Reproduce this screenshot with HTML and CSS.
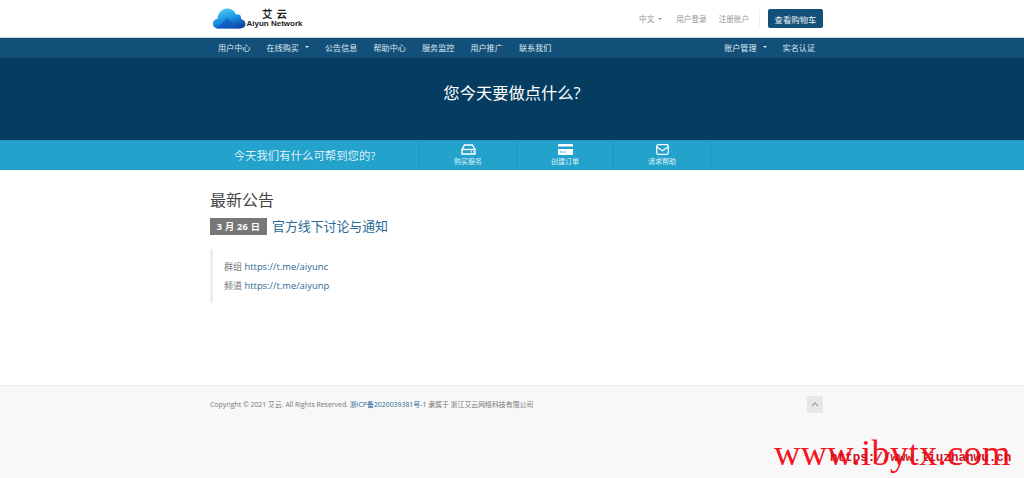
FILE: index.html
```html
<!DOCTYPE html>
<html lang="zh">
<head>
<meta charset="utf-8">
<title>艾云</title>
<link rel="stylesheet" href="styles.css">
</head>
<body>
<header class="top">
  <div class="wrap top-in">
    <a class="logo">
      <svg class="cloud" width="33" height="21" viewBox="0 0 33 21">
        <defs><linearGradient id="g" x1="0.2" y1="0" x2="0.7" y2="1"><stop offset="0" stop-color="#4fd0f8"/><stop offset="0.55" stop-color="#1a8fe0"/><stop offset="1" stop-color="#0d3fa0"/></linearGradient></defs>
        <path d="M5 20.500C1.500 20.500 0 18 0 15.500C0 12.800 2 11 4.500 10.800C5 5 9 .5 14 .5C18.500 .5 21.500 3 23 6.500C24 6 25.500 6 26.500 6.800C28 7.800 28.300 9.500 28 11C30.800 11.500 32.500 13.500 32.500 15.800C32.500 18.500 30.500 20.500 27.500 20.500Z" fill="url(#g)"/>
        <path d="M4 20.500L14 10L27 20.500Z" fill="#0e55c0" opacity=".65"/>
      </svg>
      <span class="logo-text"><span class="logo-cn">艾云</span><span class="logo-en">Aiyun Network</span></span>
    </a>
    <nav class="top-links">
      <a class="tl">中文<i class="caret"></i></a>
      <a class="tl">用户登录</a>
      <a class="tl tl-last">注册账户</a>
      <a class="cart">查看购物车</a>
    </nav>
  </div>
</header>
<nav class="mainnav">
  <div class="wrap nav-in">
    <div class="nav-group">
      <a>用户中心</a>
      <a>在线购买<i class="caret"></i></a>
      <a>公告信息</a>
      <a>帮助中心</a>
      <a>服务监控</a>
      <a>用户推广</a>
      <a>联系我们</a>
    </div>
    <div class="nav-group">
      <a>账户管理<i class="caret"></i></a>
      <a>实名认证</a>
    </div>
  </div>
</nav>
<section class="hero"><h1>您今天要做点什么?</h1></section>
<section class="actions">
  <div class="wrap act-in">
    <div class="act-title">今天我们有什么可帮到您的?</div>
    <a class="act">
      <svg width="15" height="11" viewBox="0 0 15 11" fill="none" stroke="#fff" stroke-width="1.400"><path d="M3.500 1h8L14 5.500V10H1V5.500Z"/><path d="M1 5.500h13"/><path d="M10 7.800h1M12 7.800h.8"/></svg>
      <span>购买服务</span>
    </a>
    <a class="act">
      <svg width="15" height="11" viewBox="0 0 15 11"><path d="M0 1a1 1 0 0 1 1-1h13a1 1 0 0 1 1 1v1.500H0ZM0 5h15v5a1 1 0 0 1-1 1H1a1 1 0 0 1-1-1Z" fill="#fff"/><path d="M2 8h2.500M5.500 8h2" stroke="#23a2cc" stroke-width="1.200"/></svg>
      <span>创建订单</span>
    </a>
    <a class="act">
      <svg width="13" height="11" viewBox="0 0 13 11" fill="none" stroke="#fff" stroke-width="1.300"><rect x=".7" y=".7" width="11.600" height="9.600" rx="1.500"/><path d="M1 3l5.500 3.800L12 3"/></svg>
      <span>请求帮助</span>
    </a>
  </div>
</section>
<main class="wrap content">
  <h2>最新公告</h2>
  <div class="news-head">
    <span class="date">3 月 26 日</span>
    <a class="news-title">官方线下讨论与通知</a>
  </div>
  <blockquote>
    <p><span class="zh">群组</span> <a>https://t.me/aiyunc</a></p>
    <p><span class="zh">频道</span> <a>https://t.me/aiyunp</a></p>
  </blockquote>
</main>
<footer class="foot">
  <div class="wrap foot-in">
    <p>Copyright © 2021 艾云. All Rights Reserved. <a>浙ICP备2020039381号-1</a> 隶属于 浙江艾云网络科技有限公司</p>
    <a class="up"><svg width="8" height="5" viewBox="0 0 8 5" fill="none" stroke="#a5a5a5" stroke-width="1.300"><path d="M1 4l3-3 3 3"/></svg></a>
  </div>
</footer>
<div class="mark mark-a">www.ibytx.com</div>
<div class="mark mark-b">https://www.liuzhanwu.cn</div>
</body>
</html>
```
FILE: styles.css
```css
* { box-sizing: border-box; }
html, body { margin: 0; height: 478px; overflow: hidden; }
body { position: relative; background: #fff; color: #333; font-family: "Open Sans", "Noto Sans CJK SC", sans-serif; display: flex; flex-direction: column; }
a { color: inherit; text-decoration: none; }
.wrap { width: 613px; margin: 0 201px 0 210px; }

.top { height: 37px; background: #fff; }
.top-in { height: 37px; display: flex; justify-content: space-between; align-items: center; }
.logo { display: flex; align-items: flex-end; margin-left: 3px; height: 21px; }
.cloud { display: block; }
.logo-text { display: flex; flex-direction: column; align-items: center; width: 57px; }
.logo-cn { font: 700 10.500px/11px "Noto Sans CJK SC", sans-serif; letter-spacing: 4px; color: #222; padding-left: 4px; }
.logo-en { font: 700 8px/10px "Liberation Sans", sans-serif; color: #222; }
.top-links { display: flex; align-items: center; font-size: 7.600px; color: #949494; }
.tl { margin-right: 12px; display: flex; align-items: center; white-space: nowrap; }
.tl:first-child { margin-right: 14px; }
.tl-last { margin-right: 8px; padding-right: 10px; border-right: 1px solid #f1f1f1; line-height: 18px; }
.cart { width: 55px; height: 19px; background: #12507a; color: #e8f0f5; border-radius: 2px; display: flex; align-items: center; justify-content: center; font-size: 8.400px; }
.caret { display: inline-block; margin-left: 4px; border-left: 2px solid transparent; border-right: 2px solid transparent; border-top: 2px solid currentColor; }

.mainnav { height: 21px; background: #12507a; border-top: 1px solid #c9d6df; color: #dfe9ef; font-size: 8.100px; }
.nav-in { height: 18px; display: flex; justify-content: space-between; align-items: center; padding: 0 8px; }
.nav-group { display: flex; gap: 16.100px; }
.nav-group a { display: flex; align-items: center; white-space: nowrap; }
.nav-group .caret { margin-left: 6px; }

.hero { height: 82px; background: #053c60; display: flex; justify-content: center; padding-top: 24px; }
.hero h1 { margin: 0; color: #fff; font-size: 16.300px; line-height: 23px; font-weight: 400; }

.actions { height: 30px; background: #23a2cc; border-top: 1px solid #1f95bd; }
.act-in { height: 29px; display: flex; }
.act-title { width: 210px; color: #dff1f7; font-size: 11.400px; line-height: 29px; text-align: center; padding-right: 20px; border-right: 1px solid #1f93ba; white-space: nowrap; }
.act { width: 97px; height: 29px; border-right: 1px solid #1f93ba; display: flex; flex-direction: column; align-items: center; padding-top: 3px; color: #dff1f7; font-size: 7px; line-height: 12px; }
.act svg { display: block; margin-bottom: 1px; }

.content { flex: 1; padding-top: 19px; }
.content h2 { margin: 0; font-size: 16px; line-height: 22px; font-weight: 400; color: #444; }
.news-head { display: flex; align-items: center; margin-top: 6px; height: 18px; }
.date { width: 57px; height: 17px; background: #777; color: #fff; font-size: 9.200px; font-weight: 700; line-height: 17px; text-align: center; margin-right: 5px; letter-spacing: .3px; white-space: nowrap; }
.news-title { color: #2a6a96; font-size: 12.900px; line-height: 18px; }
blockquote { margin: 14px 0 0; height: 54px; border-left: 3px solid #eee; padding: 10px 0 0 11px; font-size: 9.400px; color: #777; }
blockquote p { margin: 0 0 4px; line-height: 15px; }
.zh { font-size: 9px; }
blockquote a { color: #2a6a96; }

.foot { height: 93px; background: #f8f8f8; border-top: 1px solid #eaeaea; }
.foot-in { display: flex; justify-content: space-between; align-items: flex-start; padding-top: 10px; }
.foot p { margin: 1px 0 0; font-size: 6.900px; line-height: 16px; color: #777; }
.foot p a { color: #2a6a96; }
.up { width: 16px; height: 17px; background: #e7e7e7; border-radius: 1px; display: flex; align-items: center; justify-content: center; }

.mark { position: absolute; white-space: nowrap; }
.mark-a { left: 774px; top: 431px; font: 36.500px/44px "Liberation Serif", serif; letter-spacing: .3px; color: #f4141e; }
.mark-b { left: 830px; top: 449px; font: 700 12.600px/18px "Liberation Mono", monospace; color: #d01020; }
```
